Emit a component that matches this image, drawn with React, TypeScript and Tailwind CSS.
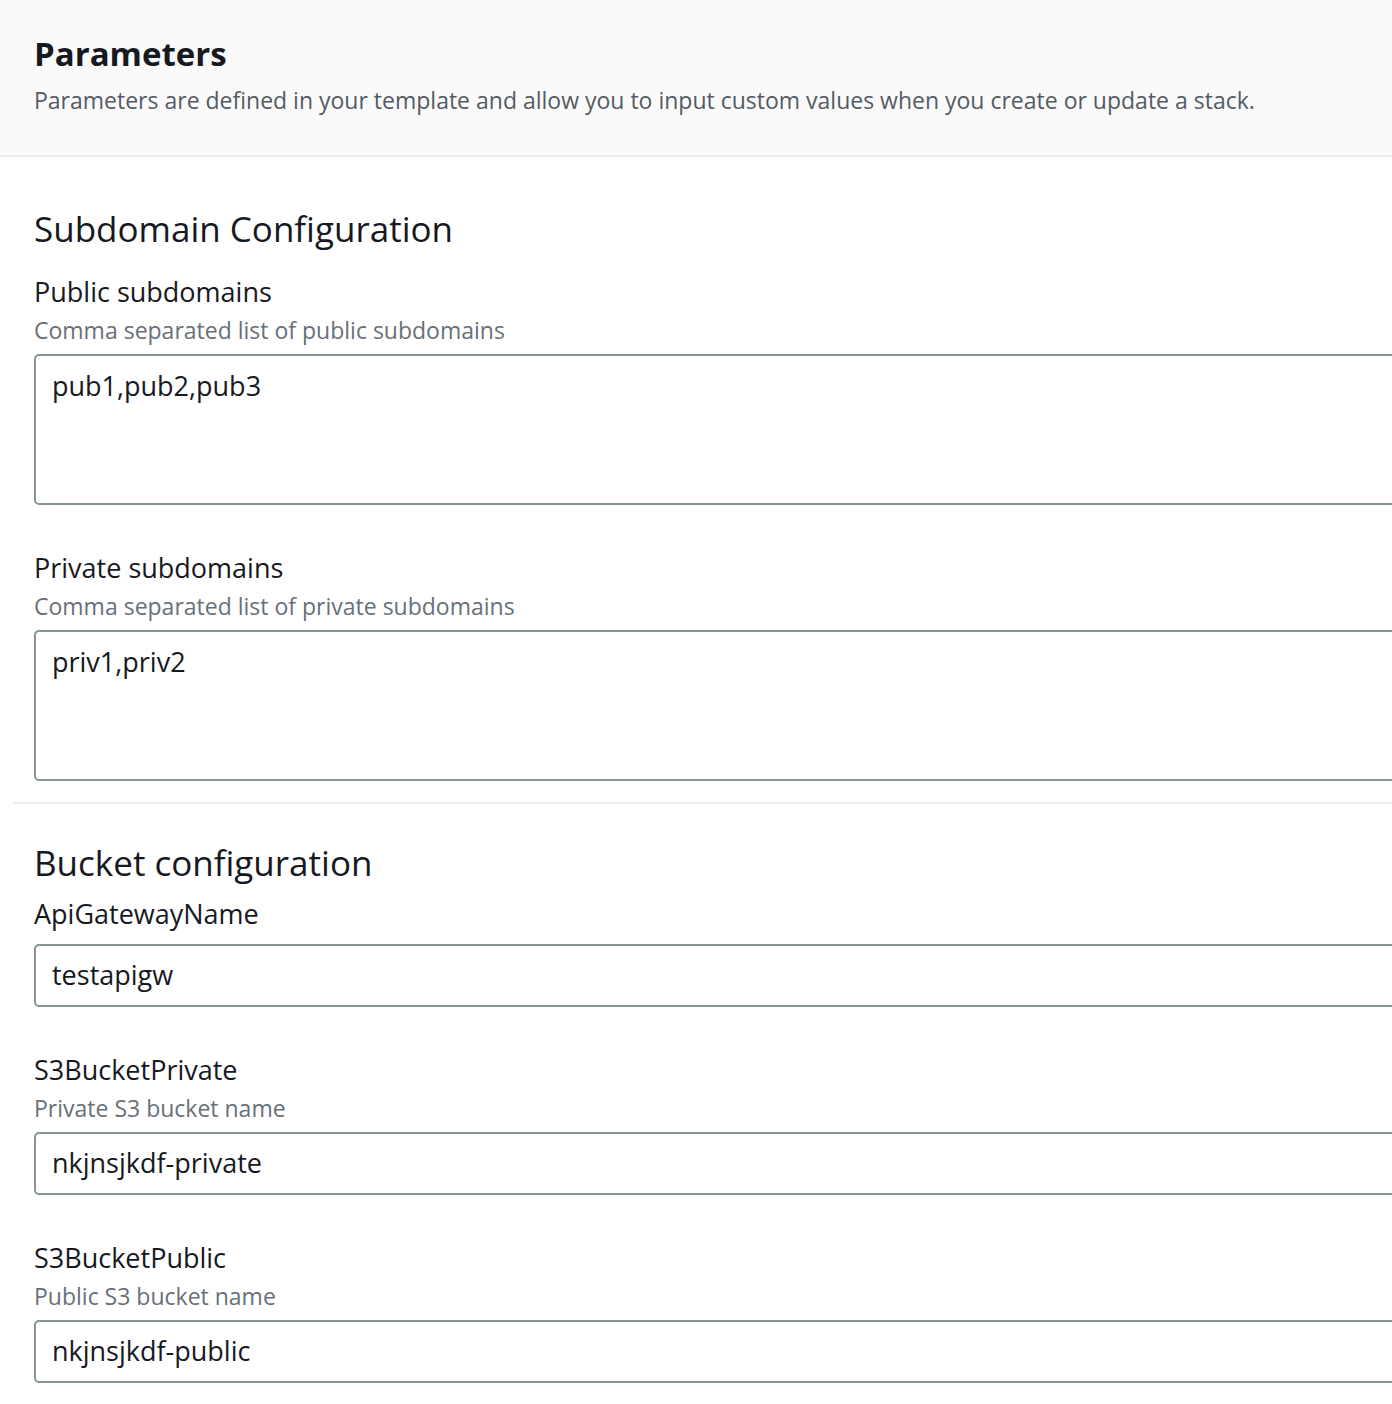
import React from "react";

const font = { fontFamily: '"Open Sans", "Noto Sans", Arial, sans-serif' };

function Label({ children }: { children: React.ReactNode }) {
  return <div className="text-[27px] leading-[34px] text-[#16191f]">{children}</div>;
}

function Desc({ children }: { children: React.ReactNode }) {
  return <div className="mt-[6px] text-[23px] leading-[30px] text-[#687078]">{children}</div>;
}

function Box({ value, tall }: { value: string; tall?: boolean }) {
  return (
    <div
      className={`w-[1420px] rounded-[5px] border-2 border-[#879596] bg-white px-[16px] text-[27px] leading-[34px] text-[#16191f] ${
        tall ? "h-[151px] pt-[13px]" : "h-[63px] pt-[12px]"
      }`}
    >
      {value}
    </div>
  );
}

export default function App() {
  return (
    <div className="w-[1392px] h-[1404px] overflow-hidden bg-white" style={font}>
      <div className="bg-[#fafafa] border-b-2 border-[#eaeded] px-[34px] pt-[34px] pb-[40px]">
        <div className="text-[33px] leading-[40px] font-bold text-[#16191f]">Parameters</div>
        <div className="mt-[11px] text-[23px] leading-[30px] text-[#545b64]">
          Parameters are defined in your template and allow you to input custom values when you create or update a stack.
        </div>
      </div>

      <div className="px-[34px] pt-[50px]">
        <div className="text-[35px] leading-[44px] text-[#16191f]">Subdomain Configuration</div>
        <div className="mt-[24px]">
          <Label>Public subdomains</Label>
          <Desc>Comma separated list of public subdomains</Desc>
          <div className="mt-[9px]">
            <Box value="pub1,pub2,pub3" tall />
          </div>
        </div>
        <div className="mt-[46px]">
          <Label>Private subdomains</Label>
          <Desc>Comma separated list of private subdomains</Desc>
          <div className="mt-[9px]">
            <Box value="priv1,priv2" tall />
          </div>
        </div>
      </div>

      <div className="ml-[14px] mt-[21px] h-[2px] bg-[#eaeded]" />

      <div className="px-[34px] pt-[37px]">
        <div className="text-[35px] leading-[44px] text-[#16191f]">Bucket configuration</div>
        <div className="mt-[12px]">
          <Label>ApiGatewayName</Label>
          <div className="mt-[13px]">
            <Box value="testapigw" />
          </div>
        </div>
        <div className="mt-[46px]">
          <Label>S3BucketPrivate</Label>
          <Desc>Private S3 bucket name</Desc>
          <div className="mt-[9px]">
            <Box value="nkjnsjkdf-private" />
          </div>
        </div>
        <div className="mt-[46px]">
          <Label>S3BucketPublic</Label>
          <Desc>Public S3 bucket name</Desc>
          <div className="mt-[9px]">
            <Box value="nkjnsjkdf-public" />
          </div>
        </div>
      </div>
    </div>
  );
}
